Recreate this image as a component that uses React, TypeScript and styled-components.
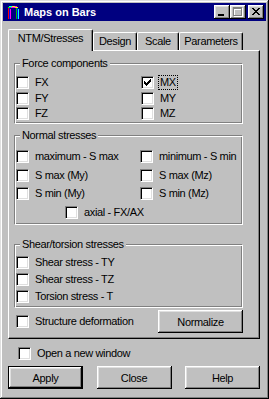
import React from "react";
import styled, { createGlobalStyle } from "styled-components";

const GlobalStyle = createGlobalStyle`
	html, body {
		margin: 0;
		padding: 0;
		background: #c0c0c0;
	}
	body {
		font-family: "Liberation Sans", Arial, sans-serif;
		font-size: 11px;
		letter-spacing: -0.35px;
		color: #000;
	}
`;

const Window = styled.div`
	box-sizing: border-box;
	width: 269px;
	height: 399px;
	padding: 3px;
	background: #c0c0c0;
	box-shadow: inset -1px -1px #000, inset 1px 1px #dfdfdf, inset -2px -2px #808080,
		inset 2px 2px #fff;
	display: flex;
	flex-direction: column;
`;

const TitleBar = styled.div`
	height: 18px;
	background: #000080;
	display: flex;
	align-items: center;
	padding: 0 2px;
	.title {
		margin-left: 3px;
		color: #fff;
		font-weight: bold;
		font-size: 11px;
		letter-spacing: 0;
		white-space: nowrap;
	}
	.caption {
		margin-left: auto;
		display: flex;
	}
`;

const CaptionButton = styled.div<{ $gap?: number }>`
	box-sizing: border-box;
	width: 16px;
	height: 14px;
	margin-left: ${(p) => p.$gap || 0}px;
	background: #c0c0c0;
	box-shadow: inset -1px -1px #000, inset 1px 1px #fff, inset -2px -2px #808080,
		inset 2px 2px #dfdfdf;
	svg {
		display: block;
	}
`;

const Body = styled.div`
	padding: 8px 6px 0 5px;
	display: flex;
	flex-direction: column;
`;

const TabRow = styled.div`
	display: flex;
	align-items: flex-end;
	height: 21px;
	position: relative;
	z-index: 1;
`;

const Tab = styled.div<{ $active?: boolean; $w: number }>`
	box-sizing: border-box;
	width: ${(p) => p.$w}px;
	height: ${(p) => (p.$active ? 22 : 18)}px;
	margin-bottom: ${(p) => (p.$active ? -1 : 0)}px;
	padding-top: 2px;
	line-height: 13px;
	text-align: center;
	white-space: nowrap;
	background: #c0c0c0;
	border-left: 1px solid #fff;
	border-top: 1px solid #fff;
	border-right: 1px solid #000;
	border-radius: 2px 2px 0 0;
	box-shadow: inset -1px 0 #808080;
`;

const Panel = styled.div`
	border: 1px solid;
	border-color: #fff #000 #000 #fff;
	box-shadow: inset -1px -1px #808080;
	padding: 6px 16px 5px 5px;
	display: flex;
	flex-direction: column;
`;

const Group = styled.fieldset<{ $pt: number; $pb: number; $mt?: number }>`
	margin: ${(p) => p.$mt || 0}px 0 0 0;
	padding: ${(p) => p.$pt}px 0 ${(p) => p.$pb}px 1px;
	border: 1px solid;
	border-color: #808080 #fff #fff #808080;
	box-shadow: inset 1px 1px #fff, inset -1px -1px #808080;
	min-inline-size: 0;
	legend {
		margin-left: 4px;
		padding: 0 2px;
		line-height: 13px;
		background: #c0c0c0;
		white-space: nowrap;
	}
`;

const Grid = styled.div<{ $col: number; $gap: number }>`
	display: grid;
	grid-template-columns: ${(p) => p.$col}px 1fr;
	row-gap: ${(p) => p.$gap}px;
`;

const Stack = styled.div<{ $gap: number }>`
	display: flex;
	flex-direction: column;
	gap: ${(p) => p.$gap}px;
`;

const CheckRow = styled.label<{ $indent?: number; $wide?: boolean }>`
	display: flex;
	align-items: center;
	gap: 6px;
	height: 13px;
	line-height: 13px;
	white-space: nowrap;
	padding-left: ${(p) => p.$indent || 0}px;
	grid-column: ${(p) => (p.$wide ? "1 / -1" : "auto")};
	.focus {
		outline: 1px dotted #000;
		padding: 0 1px;
		margin-left: -1px;
	}
`;

const Box = styled.span`
	box-sizing: border-box;
	flex: none;
	width: 13px;
	height: 13px;
	background: #fff;
	border: 1px solid;
	border-color: #808080 #fff #fff #808080;
	box-shadow: inset 1px 1px #000, inset -1px -1px #dfdfdf;
	svg {
		display: block;
		margin: 2px 0 0 2px;
	}
`;

const BottomRow = styled.div`
	display: flex;
	align-items: center;
	justify-content: space-between;
	margin-top: 2px;
	padding-left: 2px;
`;

const Button = styled.button<{ $default?: boolean; $w: number }>`
	box-sizing: border-box;
	width: ${(p) => p.$w}px;
	height: 23px;
	padding: 0;
	font: inherit;
	letter-spacing: inherit;
	color: #000;
	background: #c0c0c0;
	border: ${(p) => (p.$default ? "1px solid #000" : "none")};
	box-shadow: inset -1px -1px #000, inset 1px 1px #fff, inset -2px -2px #808080,
		inset 2px 2px #dfdfdf;
`;

const OpenRow = styled.div`
	margin-top: 8px;
	padding-left: 10px;
`;

const ButtonRow = styled.div`
	display: flex;
	justify-content: space-between;
	margin-top: 6px;
`;

const AppIcon = () => (
	<svg width='16' height='16' viewBox='0 0 16 16' shapeRendering='crispEdges'>
		<rect x='3' y='4' width='1' height='11' fill='#ff0000' />
		<rect x='4' y='4' width='1' height='11' fill='#0000ff' />
		<rect x='5' y='5' width='1' height='10' fill='#ff00ff' />
		<rect x='11' y='4' width='1' height='11' fill='#00c000' />
		<rect x='12' y='4' width='1' height='11' fill='#0000ff' />
		<rect x='13' y='5' width='1' height='10' fill='#00ffff' />
		<rect x='4' y='2' width='3' height='1' fill='#00ffff' />
		<rect x='7' y='2' width='3' height='1' fill='#ffff00' />
		<rect x='10' y='2' width='2' height='1' fill='#ff00ff' />
		<rect x='3' y='3' width='3' height='1' fill='#00ff00' />
		<rect x='6' y='3' width='4' height='1' fill='#ff00ff' />
		<rect x='10' y='3' width='3' height='1' fill='#ffff00' />
	</svg>
);

const Check = () => (
	<svg width='7' height='7' viewBox='0 0 7 7' shapeRendering='crispEdges'>
		<path
			d='M6 0h1v3h-1v1h-1v1h-1v1h-1v1h-1v-1h-1v-1h-1v-3h1v1h1v1h1v-1h1v-1h1z'
			fill='#000'
		/>
	</svg>
);

const Item = ({
	label,
	checked,
	focus,
	indent,
	wide,
}: {
	label: string;
	checked?: boolean;
	focus?: boolean;
	indent?: number;
	wide?: boolean;
}) => (
	<CheckRow $indent={indent} $wide={wide}>
		<Box>{checked ? <Check /> : null}</Box>
		<span className={focus ? "focus" : ""}>{label}</span>
	</CheckRow>
);

const tabs = [
	{ name: "NTM/Stresses", w: 85 },
	{ name: "Design", w: 44 },
	{ name: "Scale", w: 42 },
	{ name: "Parameters", w: 64 },
];

const App = () => {
	return (
		<>
			<GlobalStyle />
			<Window>
				<TitleBar>
					<AppIcon />
					<span className='title'>Maps on Bars</span>
					<div className='caption'>
						<CaptionButton>
							<svg width='16' height='14' shapeRendering='crispEdges'>
								<rect x='4' y='9' width='6' height='2' fill='#000' />
							</svg>
						</CaptionButton>
						<CaptionButton>
							<svg width='16' height='14' shapeRendering='crispEdges'>
								<path d='M4 3h9v9h-9z M5 5v6h7v-6z' fill='#fff' fillRule='evenodd' />
								<path d='M3 2h9v9h-9z M4 4v6h7v-6z' fill='#808080' fillRule='evenodd' />
							</svg>
						</CaptionButton>
						<CaptionButton $gap={2}>
							<svg width='16' height='14' shapeRendering='crispEdges'>
								<path
									d='M4 3h2v1h1v1h2v-1h1v-1h2v1h-1v1h-1v1h-1v1h1v1h1v1h1v1h-2v-1h-1v-1h-2v1h-1v1h-2v-1h1v-1h1v-1h1v-1h-1v-1h-1v-1h-1z'
									fill='#000'
								/>
							</svg>
						</CaptionButton>
					</div>
				</TitleBar>
				<Body>
					<TabRow>
						{tabs.map((t, i) => (
							<Tab key={t.name} $w={t.w} $active={i === 0}>
								{t.name}
							</Tab>
						))}
					</TabRow>
					<Panel>
						<Group $pt={6} $pb={3}>
							<legend>Force components</legend>
							<Grid $col={125} $gap={2.5}>
								<Item label='FX' />
								<Item label='MX' checked focus />
								<Item label='FY' />
								<Item label='MY' />
								<Item label='FZ' />
								<Item label='MZ' />
							</Grid>
						</Group>
						<Group $pt={8} $pb={5} $mt={5}>
							<legend>Normal stresses</legend>
							<Grid $col={124} $gap={5.7}>
								<Item label='maximum - S max' />
								<Item label='minimum - S min' />
								<Item label='S max (My)' />
								<Item label='S max (Mz)' />
								<Item label='S min (My)' />
								<Item label='S min (Mz)' />
								<Item label='axial - FX/AX' indent={49} wide />
							</Grid>
						</Group>
						<Group $pt={5} $pb={4} $mt={13}>
							<legend>Shear/torsion stresses</legend>
							<Stack $gap={4}>
								<Item label='Shear stress - TY' />
								<Item label='Shear stress - TZ' />
								<Item label='Torsion stress - T' />
							</Stack>
						</Group>
						<BottomRow>
							<Item label='Structure deformation' />
							<Button $w={85}>Normalize</Button>
						</BottomRow>
					</Panel>
					<OpenRow>
						<Item label='Open a new window' />
					</OpenRow>
					<ButtonRow>
						<Button $w={75} $default>
							Apply
						</Button>
						<Button $w={75}>Close</Button>
						<Button $w={75}>Help</Button>
					</ButtonRow>
				</Body>
			</Window>
		</>
	);
};

export default App;
